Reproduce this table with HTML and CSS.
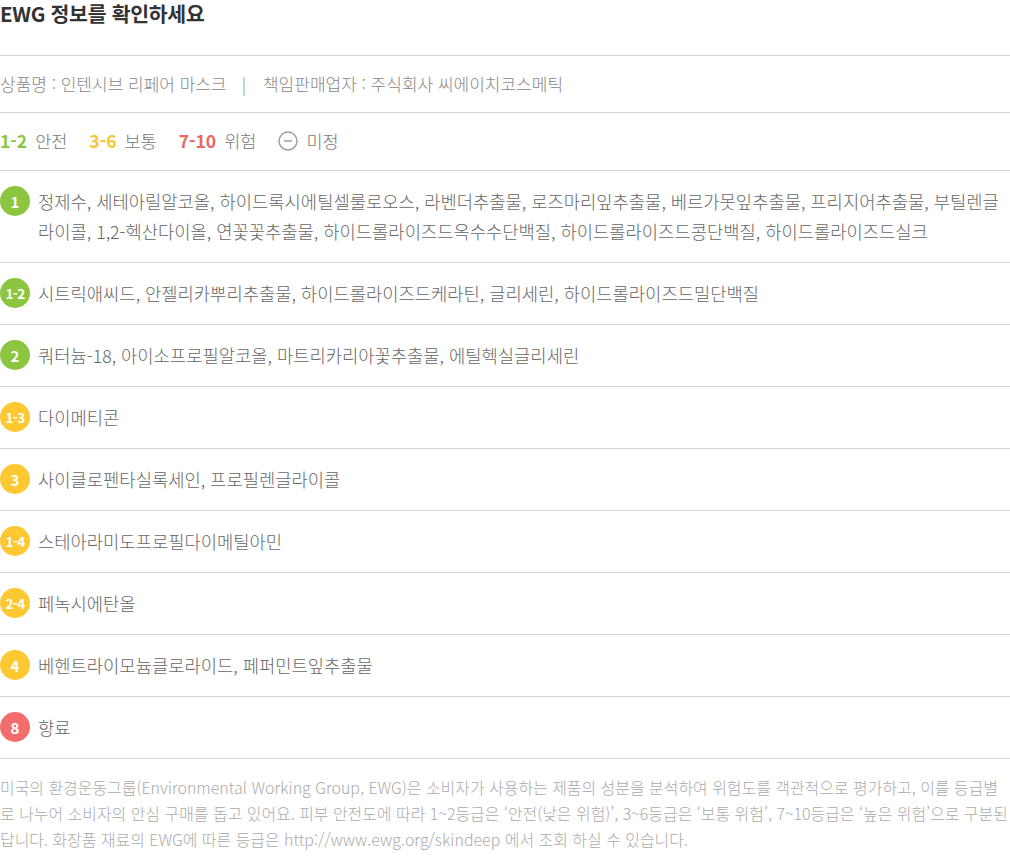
FILE: index.html
```html
<!DOCTYPE html>
<html lang="ko">
<head>
    <meta charset="UTF-8">
    <meta name="viewport" content="width=device-width, initial-scale=1.0">
    <title>EWG 정보</title>
    <link rel="stylesheet" href="styles.css">
</head>
<body>
    <div class="ewg">
        <h2 class="ewg-title">EWG 정보를 확인하세요</h2>

        <!-- 상품 정보 -->
        <p class="product-info">
            상품명 : 인텐시브 리페어 마스크<span class="divider">|</span>책임판매업자 : 주식회사 씨에이치코스메틱
        </p>

        <!-- 등급 범례 -->
        <ul class="legend">
            <li><b class="safe">1-2</b>안전</li>
            <li><b class="normal">3-6</b>보통</li>
            <li><b class="danger">7-10</b>위험</li>
            <li>
                <svg class="unknown-icon" width="20" height="20" viewBox="0 0 20 20">
                    <circle cx="10" cy="10" r="9" fill="none" stroke="#9a9a9a" stroke-width="1.4"/>
                    <line x1="6" y1="10" x2="14" y2="10" stroke="#9a9a9a" stroke-width="1.4"/>
                </svg>미정
            </li>
        </ul>

        <!-- 성분 목록 -->
        <ul class="ingredients">
            <li class="ing-row">
                <span class="grade safe-bg">1</span>
                <p>정제수, 세테아릴알코올, 하이드록시에틸셀룰로오스, 라벤더추출물, 로즈마리잎추출물, 베르가못잎추출물, 프리지어추출물, 부틸렌글라이콜, 1,2-헥산다이올, 연꽃꽃추출물, 하이드롤라이즈드옥수수단백질, 하이드롤라이즈드콩단백질, 하이드롤라이즈드실크</p>
            </li>
            <li class="ing-row">
                <span class="grade safe-bg small">1-2</span>
                <p>시트릭애씨드, 안젤리카뿌리추출물, 하이드롤라이즈드케라틴, 글리세린, 하이드롤라이즈드밀단백질</p>
            </li>
            <li class="ing-row">
                <span class="grade safe-bg">2</span>
                <p>쿼터늄-18, 아이소프로필알코올, 마트리카리아꽃추출물, 에틸헥실글리세린</p>
            </li>
            <li class="ing-row">
                <span class="grade normal-bg small">1-3</span>
                <p>다이메티콘</p>
            </li>
            <li class="ing-row">
                <span class="grade normal-bg">3</span>
                <p>사이클로펜타실록세인, 프로필렌글라이콜</p>
            </li>
            <li class="ing-row">
                <span class="grade normal-bg small">1-4</span>
                <p>스테아라미도프로필다이메틸아민</p>
            </li>
            <li class="ing-row">
                <span class="grade normal-bg small">2-4</span>
                <p>페녹시에탄올</p>
            </li>
            <li class="ing-row">
                <span class="grade normal-bg">4</span>
                <p>베헨트라이모늄클로라이드, 페퍼민트잎추출물</p>
            </li>
            <li class="ing-row">
                <span class="grade danger-bg">8</span>
                <p>향료</p>
            </li>
        </ul>

        <p class="note">미국의 환경운동그룹(Environmental Working Group, EWG)은 소비자가 사용하는 제품의 성분을 분석하여 위험도를 객관적으로 평가하고, 이를 등급별로 나누어 소비자의 안심 구매를 돕고 있어요. 피부 안전도에 따라 1~2등급은 ‘안전(낮은 위험)’, 3~6등급은 ‘보통 위험’, 7~10등급은 ‘높은 위험’으로 구분된답니다. 화장품 재료의 EWG에 따른 등급은 http://www.ewg.org/skindeep 에서 조회 하실 수 있습니다.</p>
    </div>
</body>
</html>
```

FILE: styles.css
```css
body {
    margin: 0;
    background: #fff;
    font-family: "Noto Sans CJK KR", "Noto Sans", sans-serif;
    color: #666;
}

.ewg {
    width: 1010px;
}

.ewg-title {
    margin: 0;
    padding-bottom: 29px;
    font-size: 20.5px;
    line-height: 26px;
    font-weight: 700;
    color: #333;
    letter-spacing: -0.3px;
}

.product-info {
    margin: 0;
    padding: 16px 0;
    border-top: 1px solid #d4d4d4;
    font-size: 17px;
    line-height: 24px;
    font-weight: 300;
    color: #888;
}

.divider {
    margin: 0 17px 0 15px;
}

.legend {
    list-style: none;
    margin: 0;
    padding: 16px 0 17px;
    border-top: 1px solid #d4d4d4;
    display: flex;
    gap: 22px;
    font-size: 17.5px;
    line-height: 24px;
    font-weight: 300;
    color: #777;
}

.legend li {
    display: flex;
    align-items: center;
    gap: 8px;
}

.legend b {
    font-weight: 700;
}

.safe { color: #8cc640; }
.normal { color: #f9c531; }
.danger { color: #ec6464; }

.unknown-icon {
    display: block;
}

.ingredients {
    list-style: none;
    margin: 0;
    padding: 0;
    border-top: 1px solid #d4d4d4;
}

.ing-row {
    display: flex;
    align-items: flex-start;
    gap: 8px;
    padding: 15px 0 16px;
    border-bottom: 1px solid #d4d4d4;
}

.ing-row p {
    margin: 0;
    flex: 1;
    font-size: 17.7px;
    line-height: 30px;
    font-weight: 300;
    color: #666;
}

.grade {
    flex: none;
    width: 30px;
    height: 30px;
    border-radius: 50%;
    display: flex;
    align-items: center;
    justify-content: center;
    color: #fff;
    font-size: 15px;
    font-weight: 700;
}

.grade.small {
    font-size: 13.5px;
    letter-spacing: -0.6px;
}

.safe-bg { background: #8cc640; }
.normal-bg { background: #fdc832; }
.danger-bg { background: #f46d6d; }

.note {
    margin: 0;
    padding-top: 15px;
    font-size: 15.95px;
    line-height: 26px;
    font-weight: 300;
    color: #aaa;
}
```
